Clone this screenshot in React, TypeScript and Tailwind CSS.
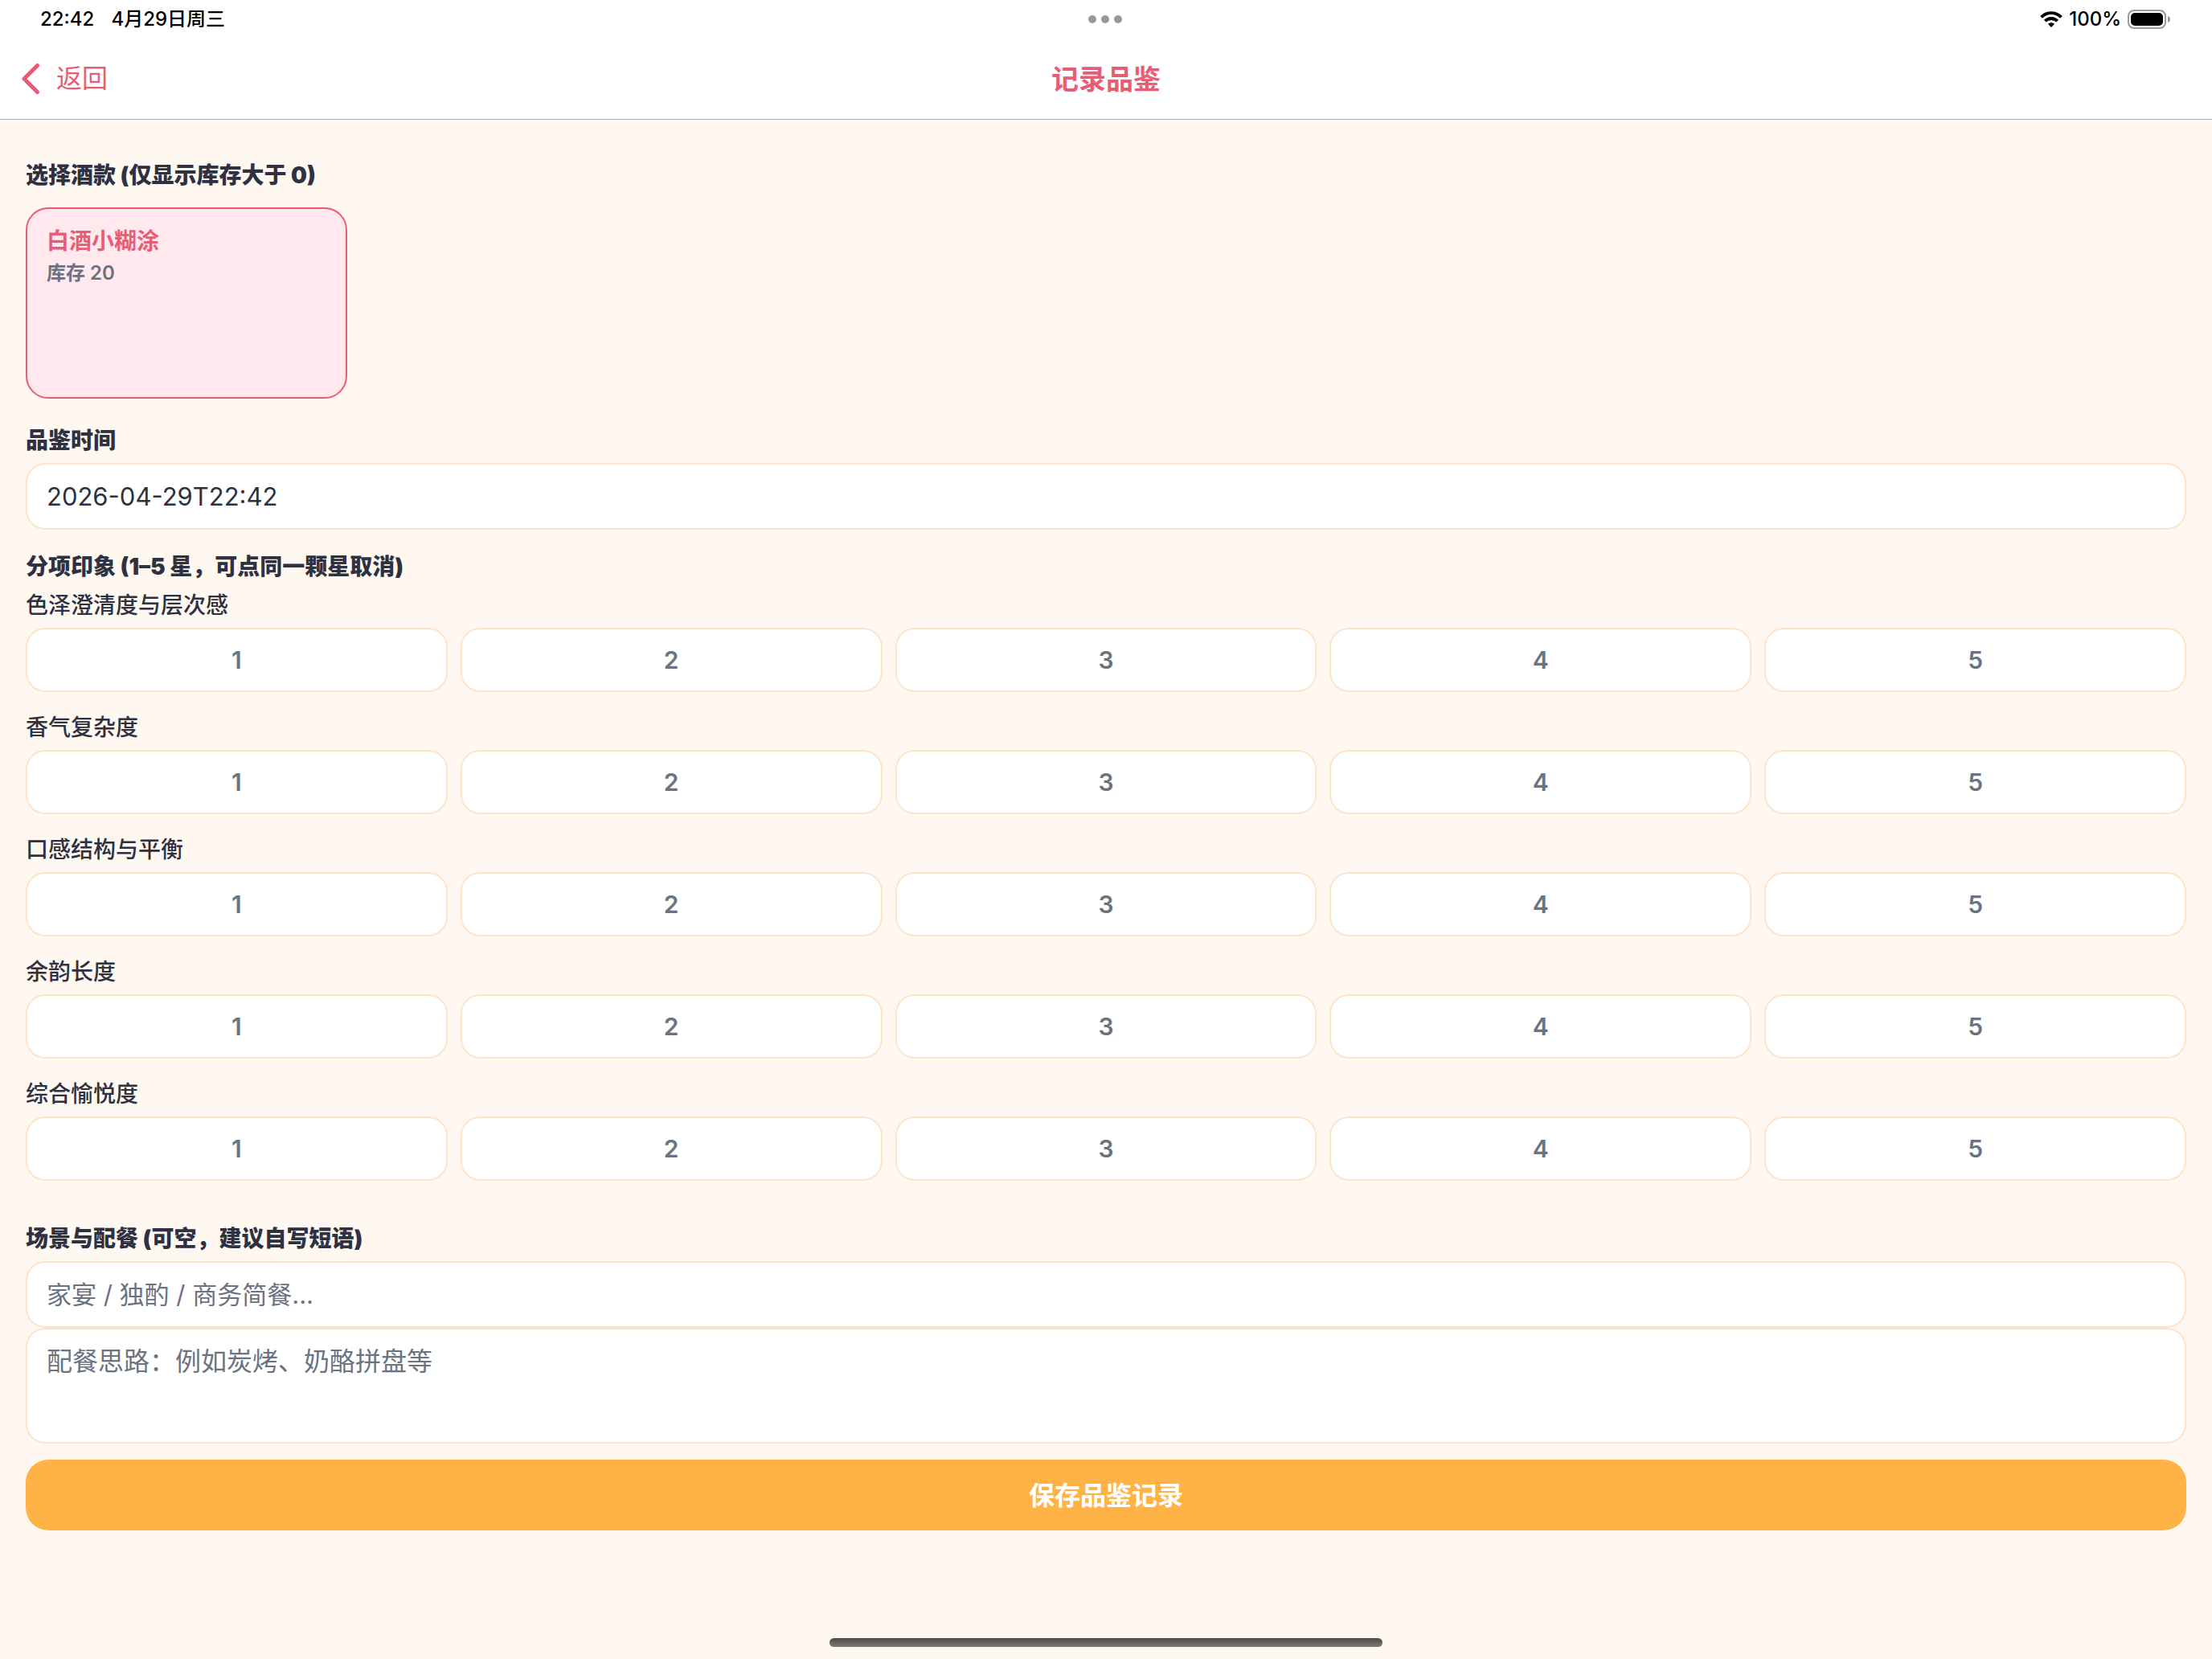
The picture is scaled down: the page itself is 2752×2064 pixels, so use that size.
import React, { useState } from 'react';

// --- Types ---
interface Wine {
  id: string;
  name: string;
  stock: number;
}

interface StarRowProps {
  label: string;
  value: number;
  onChange: (value: number) => void;
}

// --- Data ---
const WINES: Wine[] = [{ id: 'w1', name: '白酒小糊涂', stock: 20 }];

const ASPECTS = ['色泽澄清度与层次感', '香气复杂度', '口感结构与平衡', '余韵长度', '综合愉悦度'];

const fieldStyle =
  'block w-full rounded-3xl border-2 border-[#ffe4cc] bg-white px-6 text-[#2d3142] placeholder:text-[#6b7280] placeholder:opacity-100 outline-none';
const headingStyle = 'block text-[28px] leading-9 font-black text-[#2d3142]';

const StatusBar: React.FC = () => (
  <div className="grid h-12 grid-cols-3 items-center pr-[52px] pl-[50px] text-2xl font-medium text-black">
    <div className="flex items-center gap-[21px]">
      <span>22:42</span>
      <span>4月29日周三</span>
    </div>
    <div className="flex justify-center gap-1.5">
      <span className="size-2.5 rounded-full bg-[#999999]" />
      <span className="size-2.5 rounded-full bg-[#999999]" />
      <span className="size-2.5 rounded-full bg-[#999999]" />
    </div>
    <div className="flex items-center justify-end gap-2">
      <svg width="28" height="20" viewBox="0 0 28 20" fill="none" stroke="black" strokeWidth="3.8">
        <path d="M1.6 7.4C8.4 .4 19.6 .4 26.4 7.4" />
        <path d="M6.3 12.2C10.6 7.9 17.4 7.9 21.7 12.2" />
        <path d="M14 20L9.9 15.8C12.2 13.6 15.8 13.6 18.1 15.8Z" fill="black" stroke="none" />
      </svg>
      <span>100%</span>
      <svg width="53" height="24" viewBox="0 0 53 24">
        <rect x="1" y="1" width="46" height="22" rx="7" fill="none" stroke="#999999" strokeWidth="2" />
        <rect x="4" y="4" width="40" height="16" rx="5" fill="black" />
        <path d="M50 8C52 8.6 53 10 53 12C53 14 52 15.4 50 16Z" fill="#999999" />
      </svg>
    </div>
  </div>
);

const StarRow: React.FC<StarRowProps> = ({ label, value, onChange }) => (
  <div role="group" aria-label={label}>
    <div className="mb-2.5 text-[28px] leading-9 font-medium text-[#2d3142]">{label}</div>
    <div className="grid grid-cols-5 gap-4">
      {[1, 2, 3, 4, 5].map(n => (
        <button
          key={n}
          type="button"
          aria-pressed={value === n}
          onClick={() => onChange(value === n ? 0 : n)}
          className={`h-20 rounded-3xl border-2 text-[30px] font-semibold ${
            value === n ? 'border-[#e85d75] bg-[#ffe8ee] text-[#e85d75]' : 'border-[#ffe4cc] bg-white text-[#6b7280]'
          }`}
        >
          {n}
        </button>
      ))}
    </div>
  </div>
);

const App: React.FC = () => {
  const [wineId, setWineId] = useState('w1');
  const [time, setTime] = useState('2026-04-29T22:42');
  const [scores, setScores] = useState<Record<string, number>>({});
  const [scene, setScene] = useState('');
  const [pairing, setPairing] = useState('');

  return (
    <div
      lang="zh-CN"
      className="flex min-h-screen flex-col bg-[#fff8f0] font-[Inter,'Noto_Sans_CJK_SC',sans-serif]"
    >
      <header className="border-b border-[#ababab] bg-white">
        <StatusBar />
        <nav className="grid h-[100px] grid-cols-3 items-center px-[26px] text-[#e85d75]">
          <button type="button" className="flex items-center gap-5 text-[32px]">
            <svg width="24" height="40" viewBox="0 0 24 40" fill="none" stroke="currentColor" strokeWidth="5" strokeLinecap="round" strokeLinejoin="round">
              <path d="M20.5 3.5L4 20L20.5 36.5" />
            </svg>
            返回
          </button>
          <h1 className="text-center text-[34px] font-semibold">记录品鉴</h1>
        </nav>
      </header>

      <main className="px-8 pt-[51px]">
        <h2 className={headingStyle}>选择酒款 (仅显示库存大于 0)</h2>
        <div className="mt-[22px] flex flex-wrap gap-4">
          {WINES.map(wine => (
            <button
              key={wine.id}
              type="button"
              aria-pressed={wineId === wine.id}
              onClick={() => setWineId(wine.id)}
              className={`flex h-[238px] w-[400px] flex-col items-start rounded-[28px] border-2 px-6 py-5 ${
                wineId === wine.id ? 'border-[#e85d75] bg-[#ffe8ee] text-[#e85d75]' : 'border-[#ffe4cc] bg-white text-[#2d3142]'
              }`}
            >
              <span className="text-[28px] leading-10 font-bold">{wine.name}</span>
              <span className="text-2xl leading-10 font-semibold text-[#6b7280]">库存 {wine.stock}</span>
            </button>
          ))}
        </div>

        <label htmlFor="time" className={`${headingStyle} mt-[34px] mb-2.5`}>品鉴时间</label>
        <input id="time" type="text" value={time} onChange={e => setTime(e.target.value)} className={`${fieldStyle} h-[83px] text-[31px]`} />

        <h2 className={`${headingStyle} mt-7 mb-3`}>分项印象 (1–5 星，可点同一颗星取消)</h2>
        <div className="flex flex-col gap-[26px]">
          {ASPECTS.map(aspect => (
            <StarRow
              key={aspect}
              label={aspect}
              value={scores[aspect] || 0}
              onChange={v => setScores({ ...scores, [aspect]: v })}
            />
          ))}
        </div>

        <label htmlFor="scene" className={`${headingStyle} mt-[54px] mb-2.5`}>场景与配餐 (可空，建议自写短语)</label>
        <input
          id="scene"
          type="text"
          value={scene}
          onChange={e => setScene(e.target.value)}
          placeholder="家宴 / 独酌 / 商务简餐..."
          className={`${fieldStyle} h-[83px] text-[31px]`}
        />
        <textarea
          aria-label="配餐思路"
          value={pairing}
          onChange={e => setPairing(e.target.value)}
          placeholder="配餐思路：例如炭烤、奶酪拼盘等"
          className={`${fieldStyle} h-36 resize-none py-[18px] text-[32px] leading-[44px]`}
        />

        <button type="button" className="mt-5 h-[88px] w-full rounded-[28px] bg-[#ffb347] pt-0.5 text-[32px] font-bold text-white">
          保存品鉴记录
        </button>
      </main>

      {/* Home indicator */}
      <div className="mt-auto flex justify-center pt-8 pb-[15px]">
        <div className="h-[11px] w-1/4 rounded-full bg-linear-to-b from-[#4d4a47] to-[#807b78]" />
      </div>
    </div>
  );
};

export default App;
